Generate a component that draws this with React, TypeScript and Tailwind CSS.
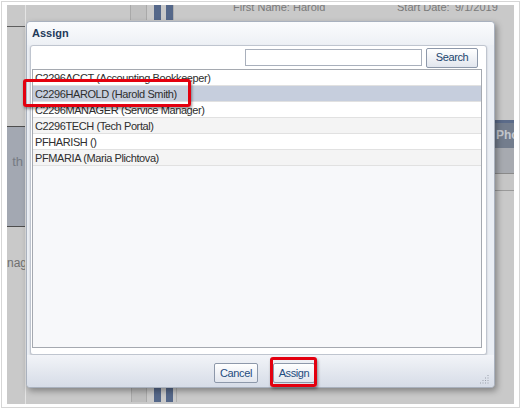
import React from "react";

const ROWS = [
  "C2296ACCT (Accounting Bookkeeper)",
  "C2296HAROLD (Harold Smith)",
  "C2296MANAGER (Service Manager)",
  "C2296TECH (Tech Portal)",
  "PFHARISH ()",
  "PFMARIA (Maria Plichtova)",
];

const SELECTED = 1;

function Btn({ label, className = "" }: { label: string; className?: string }) {
  return (
    <div
      className={
        "h-[20px] box-border flex items-center justify-center rounded-[2px] border border-[#8d98aa] bg-gradient-to-b from-white to-[#e2e6ee] text-[11px] leading-[13px] tracking-[-0.4px] text-[#1f4c7e] " +
        className
      }
    >
      {label}
    </div>
  );
}

function Grip() {
  const dots: [number, number][] = [];
  for (let r = 0; r < 4; r++) {
    for (let c = 3 - r; c < 4; c++) dots.push([c * 2.5 + 1, r * 2.5 + 1]);
  }
  return (
    <svg width="11" height="11" viewBox="0 0 11 11" className="absolute right-[4px] bottom-[2px]">
      {dots.map(([x, y], i) => (
        <rect key={i} x={x} y={y} width="1" height="1" fill="#9aa0aa" />
      ))}
    </svg>
  );
}

export default function App() {
  return (
    <div className="w-[521px] h-[410px] bg-white font-['Liberation_Sans',Arial,sans-serif] pt-[1px] pl-[1px]">
      <div className="box-border w-[519px] h-[407px] border border-[#d6d6d6] pl-[5px] pr-[5px] pt-[3px] pb-[3px]">
        <div className="relative w-[507px] h-[399px] overflow-hidden bg-[#c9c9c9] flex">
          {/* left strip of the page behind */}
          <div className="w-[18px] shrink-0 flex flex-col overflow-hidden">
            <div className="h-[22px] border-b border-[#5e5e5e]" />
            <div className="h-[100px] border-b border-[#4e4e4e]" />
            <div className="h-[100px] border-b border-[#4e4e4e] bg-[#a3a8b2] flex justify-end pt-[27px]">
              <div className="text-[13px] leading-[15px] text-[#767b84] whitespace-nowrap pr-[2px]">th</div>
            </div>
            <div className="flex justify-end pt-[29px]">
              <div className="text-[12px] leading-[14px] text-[#707070] whitespace-nowrap -mr-[2px]">anag</div>
            </div>
          </div>
          <div className="w-[1px] shrink-0 bg-[#e4e4e4]" />

          {/* middle of the page behind */}
          <div className="w-[469px] shrink-0 flex flex-col justify-between">
            <div className="h-[15px] flex items-stretch">
              <div className="w-[105px] shrink-0 border-r border-[#a9a9a9]" />
              <div className="w-[16px] shrink-0 bg-[#c0c0c0] border-r border-[#a9a9a9]" />
              <div className="w-[7px] shrink-0" />
              <div className="w-[7px] shrink-0 bg-[#55688a]" />
              <div className="w-[5px] shrink-0" />
              <div className="w-[7px] shrink-0 bg-[#55688a]" />
              <div className="w-[60px] shrink-0 border-l border-[#b0b0b0]" />
              <div className="flex text-[11px] leading-[13px] text-[#7a7a7a] -mt-[4px] whitespace-nowrap">
                <div className="w-[60px]">First Name:</div>
                <div className="w-[104px]">Harold</div>
                <div className="w-[58px]">Start Date:</div>
                <div>9/1/2019</div>
              </div>
            </div>
            <div className="h-[16px] mb-[2px] flex items-stretch">
              <div className="w-[105px] shrink-0" />
              <div className="w-[16px] shrink-0 bg-[#bdbdbd] border-l border-r border-[#a9a9a9]" />
              <div className="w-[7px] shrink-0" />
              <div className="w-[7px] shrink-0 bg-[#55688a]" />
              <div className="w-[5px] shrink-0" />
              <div className="w-[7px] shrink-0 bg-[#55688a]" />
              <div className="w-[4px] shrink-0 border-r border-[#b0b0b0]" />
            </div>
          </div>

          {/* right strip of the page behind */}
          <div className="w-[19px] shrink-0 flex flex-col overflow-hidden">
            <div className="h-[115px]" />
            <div className="h-[28px] border-t-[3px] border-[#5b6b89] bg-[#737d8d] pl-[1px] pt-[5px]">
              <div className="text-[12px] font-bold leading-[14px] text-[#c3c7ce] whitespace-nowrap">Pho</div>
            </div>
            <div className="h-[26px] bg-[#a7aab0] border-b border-[#8a8a8a]" />
            <div className="h-[17px] bg-[#c6c6c6] border-b border-[#9a9a9a]" />
          </div>

          {/* Assign dialog */}
          <div className="absolute left-[19px] top-[16px] w-[469px] h-[367px] box-border rounded-[4px] border border-[#a9b1be] bg-[#eaeef4] shadow-[2px_3px_6px_rgba(0,0,0,0.35)] flex flex-col">
            <div className="h-[23px] shrink-0 rounded-t-[4px] bg-gradient-to-b from-[#fbfcfd] to-[#edf0f5] pl-[5px] pt-[5px] text-[11px] leading-[13px] font-bold text-[#1f3a5a]">
              Assign
            </div>
            <div className="ml-[3px] mr-[7px] h-[310px] shrink-0 box-border rounded-[3px] border border-[#bfc5cf] bg-white shadow-[0_1px_2px_rgba(0,0,0,0.2)] flex flex-col">
              <div className="h-[23px] shrink-0 flex items-center justify-end pr-[8px] gap-[4px]">
                <div className="w-[177px] h-[17px] box-border border border-[#a9b0bc] bg-white" />
                <Btn label="Search" className="w-[52px] h-[19px] text-[#22466e]" />
              </div>
              <div className="ml-[1px] mr-[4px] h-[279px] box-border border border-[#a5a9b0] bg-[#f7f8fa] overflow-hidden">
                {ROWS.map((r, i) => (
                  <div
                    key={r}
                    className={
                      "h-[16px] box-border border-b border-[#e1e1e1] pl-[2px] pt-[2px] text-[11px] leading-[13px] tracking-[-0.4px] text-[#2e2e2e] whitespace-nowrap " +
                      (i === SELECTED ? "bg-[#c6cedd]" : i % 2 === 0 ? "bg-white" : "bg-[#f4f4f4]")
                    }
                  >
                    {r}
                  </div>
                ))}
              </div>
            </div>
            <div className="relative flex-1 rounded-b-[4px] bg-gradient-to-b from-[#f2f4f8] to-[#d6dce7] flex justify-center items-start pt-[8px] pl-[8px] gap-[15px]">
              <Btn label="Cancel" className="w-[44px]" />
              <Btn label="Assign" className="w-[42px]" />
              <Grip />
            </div>
          </div>

          {/* red callouts */}
          <div className="absolute left-[16px] top-[74px] w-[168px] h-[28px] box-border rounded-[3px] border-[3px] border-[#e3000f] shadow-[1px_2px_3px_rgba(0,0,0,0.4)]" />
          <div className="absolute left-[263px] top-[352px] w-[47px] h-[30px] box-border rounded-[3px] border-[3px] border-[#e3000f] shadow-[1px_2px_3px_rgba(0,0,0,0.4)]" />
        </div>
      </div>
    </div>
  );
}
